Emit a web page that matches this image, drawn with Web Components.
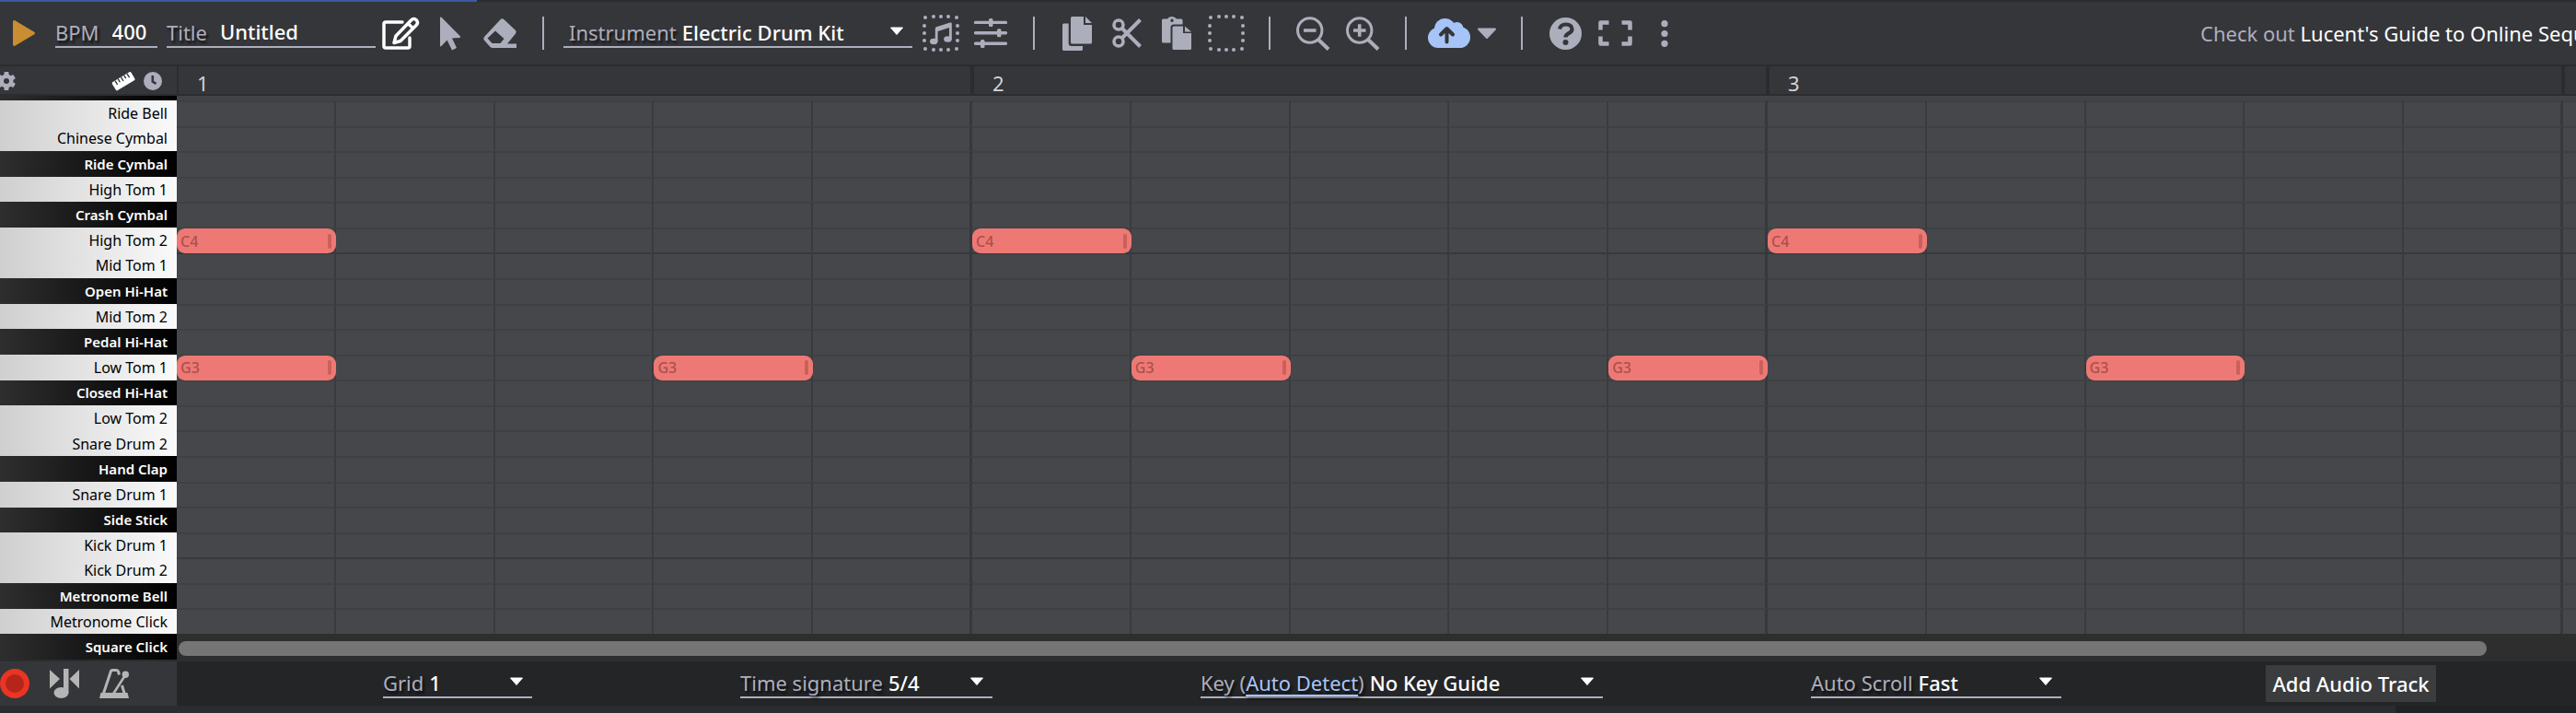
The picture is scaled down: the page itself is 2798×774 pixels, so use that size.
<!DOCTYPE html>
<html lang="en">
<head>
<meta charset="utf-8">
<title>Online Sequencer</title>
<style>
html { background: #2b2c30; }
body { margin: 0; font: 22px/30px "Noto Sans", "Open Sans", sans-serif; color: #fff; }
</style>
</head>
<body>
<seq-app></seq-app>

<template id="app-t">
<style>
:host { display: flex; flex-direction: column; min-height: 100vh; background: #2b2c30; overflow: hidden;
  --panel: #35363a; --line: #2b2c30; --muted: #adaebc; }
.progress { height: 2px; }
.progress i { display: block; height: 2px; width: 518px; background: #3b5ba5; }
</style>
<div class="progress"><i></i></div>
<seq-toolbar></seq-toolbar>
<seq-ruler></seq-ruler>
<seq-roll></seq-roll>
<seq-footer></seq-footer>
</template>

<template id="toolbar-t">
<style>
:host { display: flex; align-items: center; height: 68px; background: var(--panel); border-bottom: 2px solid var(--line); color: var(--muted); }
.play { width: 46px; margin-right: 14px; padding-left: 6px; box-sizing: border-box; }
button { flex: none; width: 54px; height: 54px; padding: 0; border: 0; background: none; color: inherit; display: flex; align-items: center; justify-content: center; }
.on { color: #fff; }
.small { width: 32px; padding-right: 4px; }
hr { flex: none; width: 2px; height: 36px; margin: 0 19px; border: 0; background: var(--muted); }
.bpm { width: 111px; margin-right: 10px; }
.title { width: 227px; }
.inst { width: 379px; margin: 0 4px 0 2px; }
seq-field { flex: none; }
.promo { flex: 0 0 408px; min-width: 0; margin-left: auto; white-space: nowrap; }
a { color: #fff; text-decoration: none; }
</style>
<button class="play" aria-label="Play"><seq-icon name="play"></seq-icon></button>
<seq-field class="bpm" label="BPM" value="400"></seq-field>
<seq-field class="title" label="Title" value="Untitled"></seq-field>
<button class="on" aria-label="Draw"><seq-icon name="pencil"></seq-icon></button>
<button aria-label="Select"><seq-icon name="cursor"></seq-icon></button>
<button aria-label="Erase"><seq-icon name="eraser"></seq-icon></button>
<hr>
<seq-select class="inst" label="Instrument" value="Electric Drum Kit" indent></seq-select>
<button aria-label="Select instrument notes"><seq-icon name="musicbox"></seq-icon></button>
<button aria-label="Mixer"><seq-icon name="sliders"></seq-icon></button>
<hr>
<button aria-label="Copy"><seq-icon name="copy"></seq-icon></button>
<button aria-label="Cut"><seq-icon name="cut"></seq-icon></button>
<button aria-label="Paste"><seq-icon name="paste"></seq-icon></button>
<button aria-label="Select all"><seq-icon name="marquee"></seq-icon></button>
<hr>
<button aria-label="Zoom out"><seq-icon name="zoomout"></seq-icon></button>
<button aria-label="Zoom in"><seq-icon name="zoomin"></seq-icon></button>
<hr>
<button aria-label="Save"><seq-icon name="cloud"></seq-icon></button>
<button class="small" aria-label="Save options"><seq-icon name="caret"></seq-icon></button>
<hr>
<button aria-label="Help"><seq-icon name="help"></seq-icon></button>
<button aria-label="Fullscreen"><seq-icon name="full"></seq-icon></button>
<button aria-label="More"><seq-icon name="more"></seq-icon></button>
<div class="promo">Check out <a href="#guide">Lucent's Guide to Online Sequencer</a></div>
</template>

<template id="field-t">
<style>
:host { display: block; box-sizing: border-box; height: 32px; border-bottom: 2px solid #adaebc; }
label { display: flex; gap: 14px; align-items: center; height: 30px; white-space: nowrap; }
span { color: #adaebc; text-shadow: 2px 3px 3px rgba(0,0,0,.7); }
input { flex: 1; min-width: 0; width: 0; height: 30px; padding: 0 0 2px; border: 0; background: none; color: #fff; font: 500 22px/28px "Noto Sans", sans-serif; outline: 0; box-sizing: border-box; }
</style>
<label><span></span><input type="text"></label>
</template>

<template id="select-t">
<style>
:host { display: block; box-sizing: border-box; height: 32px; border-bottom: 2px solid #adaebc; }
:host([indent]) { padding-left: 6px; }
div { display: flex; gap: 6px; height: 30px; align-items: center; white-space: nowrap; position: relative; }
label, ::slotted(*) { color: #adaebc; text-shadow: 2px 3px 3px rgba(0,0,0,.7); }
select { appearance: none; flex: 1; min-width: 0; height: 30px; margin: 0; padding: 0; border: 0; background: none; color: #fff; font: 500 22px/30px "Noto Sans", sans-serif; outline: 0; }
seq-icon { position: absolute; right: 9px; top: 9px; pointer-events: none; color: #fff; }
</style>
<div><label for="s"><slot></slot></label><select id="s"></select><seq-icon name="arrow"></seq-icon></div>
</template>

<template id="ruler-t">
<style>
:host { display: flex; height: 30px; background: var(--panel); border-bottom: 2px solid var(--line); }
.tools { flex: none; width: 192px; display: flex; align-items: center; box-sizing: border-box; padding: 2px 16px 0 0; color: #adaebc; }
.tools button { padding: 0; border: 0; background: none; color: inherit; height: 22px; display: flex; align-items: center; }
.gear { margin-left: -3px; }
.measure { margin-left: auto; margin-right: 9px; }
.tools .measure { color: #fff; }
.bars { flex: 1; min-width: 0; display: flex; }
.bar { flex: none; width: 864px; box-sizing: border-box; border: solid var(--line); border-width: 0 2px; padding-left: 20px; color: #d2d2d2; height: 30px; }
.bar span { display: block; padding-top: 3px; }
</style>
<div class="tools">
<button class="gear" aria-label="Settings"><seq-icon name="gear"></seq-icon></button>
<button class="measure" aria-label="Measures"><seq-icon name="measure"></seq-icon></button>
<button aria-label="Time"><seq-icon name="clock"></seq-icon></button>
</div>
<div class="bars"></div>
</template>

<template id="roll-t">
<style>
:host { flex: 1; display: flex; min-height: 500px; }
.keys { flex: none; width: 192px; display: flex; flex-direction: column; border-bottom: 2px solid var(--line); }
.edge { height: 5px; background: linear-gradient(90deg, #2e2e2e, #000); }
.main { flex: 1; min-width: 0; display: flex; flex-direction: column; overflow: hidden; }
.bars { flex: 1; display: flex; padding-top: 5px; background: #424347; }
.scroll { flex: none; height: 30px; box-sizing: border-box; padding: 8px 97px 6px 2px; background: #2e2e2e; }
.thumb { height: 16px; border-radius: 8px; background: #757575; }
</style>
<div class="keys"><div class="edge"></div></div>
<div class="main"><div class="bars"></div><div class="scroll"><div class="thumb"></div></div></div>
</template>

<template id="key-t">
<style>
:host { flex: 1 1 0; min-height: 0; display: flex; }
button { flex: 1; border: 0; padding: 0 10px 0 0; text-align: right; font: 16px/24px "Noto Sans", sans-serif; color: #000; background: linear-gradient(90deg, #cfcfcf, #fafafa); white-space: nowrap; min-height: 0; }
:host([black]) button { color: #fff; font-weight: 600; font-size: 15px; background: linear-gradient(90deg, #2e2e2e, #000); }
</style>
<button><slot></slot></button>
</template>

<template id="bar-t">
<style>
:host { flex: none; width: 864px; display: grid; grid-template: repeat(21, minmax(0, 1fr)) / repeat(5, minmax(0, 1fr)); background: #46474b; }
i { border: solid #3f4044; border-width: 2px 0 0; border-right: 2px solid #3a3b3f; }
i.end { border-right: 3px solid #37383c; }
i.octave { border-top-color: #38393d; }
</style>
</template>

<template id="note-t">
<style>
:host { display: flex; align-items: center; justify-content: space-between; box-sizing: border-box; padding: 0 5px 0 4px; margin: 1px 0 -1px; border-radius: 9px; background: #ee7974; color: #a9504d; font: 500 16px/20px "Noto Sans", sans-serif; }
b { width: 4px; height: 16px; border-radius: 2px; background: #c9605c; }
</style>
<slot></slot><b></b>
</template>

<template id="footer-t">
<style>
:host { display: block; }
.row { display: flex; height: 48px; background: #242527; }
.left { flex: none; width: 192px; display: flex; align-items: center; gap: 22px; background: var(--panel); color: #b5b5b5; }
.left button { width: 32px; height: 32px; padding: 0; border: 0; background: none; color: inherit; display: flex; }
.controls { flex: 1; min-width: 0; display: flex; align-items: center; gap: 226px; padding-left: 224px; white-space: nowrap; }
seq-select { flex: none; }
.grid { width: 162px; } .time { width: 274px; } .key { width: 437px; } .auto { width: 272px; }
a { color: #a8c4f7; text-underline-offset: 4px; }
.add { flex: none; width: 185px; height: 40px; margin-left: -4px; padding: 0; border: 0; background: #3b3c3e; color: #fff; font: 500 22px/30px "Noto Sans", sans-serif; }
.strip { height: 8px; display: flex; }
.strip i { width: 196px; margin-left: auto; background: #202123; }
</style>
<div class="row">
<div class="left">
<button aria-label="Record"><seq-icon name="record"></seq-icon></button>
<button aria-label="Snap notes"><seq-icon name="snap"></seq-icon></button>
<button aria-label="Metronome"><seq-icon name="metro"></seq-icon></button>
</div>
<div class="controls">
<seq-select class="grid" label="Grid" value="1"></seq-select>
<seq-select class="time" label="Time signature" value="5/4"></seq-select>
<seq-select class="key" value="No Key Guide"><span>Key (<a href="#detect">Auto Detect</a>)</span></seq-select>
<seq-select class="auto" label="Auto Scroll" value="Fast"></seq-select>
<button class="add">Add Audio Track</button>
</div>
</div>
<div class="strip"><i></i></div>
</template>

<script>
const dots = [[3,3],[12,2],[20,2],[28,2],[37,3],[2,12],[2,20],[2,28],[3,37],[38,12],[38,20],[38,28],[37,37],[12,38],[20,38],[28,38]]
  .map(([x, y]) => `<circle cx="${x}" cy="${y}" r="2"/>`).join('');
const stroke = (w, d, cap = 'butt') => `<path d="${d}" fill="none" stroke="currentColor" stroke-width="${w}" stroke-linecap="${cap}" stroke-linejoin="round"/>`;
const lens = '<circle cx="14.7" cy="15" r="13.2" fill="none" stroke="currentColor" stroke-width="3"/>' + stroke(4, 'M24 25L35 35.5');
const teeth = [0, 60, 120, 180, 240, 300].map(a => `<rect x="7.5" y="0" width="5" height="6" rx="1" transform="rotate(${a} 10 10)"/>`).join('');
const icons = {
  play: [26, 30, '<path d="M2.5 2.5L23.5 15 2.5 27.5Z" fill="#c98d32" stroke="#c98d32" stroke-width="3" stroke-linejoin="round"/>'],
  pencil: [42, 38, stroke(3.5, 'M23 7H5Q3 7 3 9V33Q3 35 5 35H29Q31 35 31 33V24', 'round') + stroke(3.5, 'M14 29.5L16 22 33 4.5Q35.500 2.500 38 4.500L38.500 5Q40.500 7.500 38.500 10L21 27.500Z M29 8.500L35 14')],
  cursor: [22, 37, '<path d="M0 1Q.5 0 1.500 .8L22 21.500Q22.500 22.800 21 23L13 23.500 18 34 13 36.500 7.600 25.600 1.500 32Q0 33 0 31.500Z"/>'],
  eraser: [36, 32, '<path fill-rule="evenodd" d="M18.500 1.200Q20.500-.8 22.500 1.200L34.800 12.800Q36.500 14.500 35 16.500L26 27.500H36V32H10Q8.500 32 7.500 31L.8 23.500Q-.5 21.500 1 20ZM13 13.500L4.500 21.500 9.500 27H18.500L22.500 22Z"/>'],
  musicbox: [40, 40, dots + '<ellipse cx="12.300" cy="29" rx="4.300" ry="3.200"/><ellipse cx="27.500" cy="26.500" rx="4.300" ry="3.200"/><path d="M13.800 29V15Q13.800 13.700 15 13.200L30 8.500Q31.800 8 31.800 9.500V26.500H29V14L16.600 18V29Z"/>'],
  sliders: [36, 32, stroke(3.4, 'M1.500 4.400H34.500M1.500 15.700H34.500M1.500 27.300H34.500', 'round') + '<rect x="16" width="4.500" height="9" rx="1.500"/><rect x="25" y="11.300" width="4.500" height="9" rx="1.500"/><rect x="7" y="23" width="4.500" height="9" rx="1.500"/>'],
  copy: [32, 37, '<path d="M10.500 0H23V9H32V28Q32 29.500 30.500 29.500H10.500Q9 29.500 9 28V1.500Q9 0 10.500 0ZM25 0L32 7H25ZM1.500 7.500H6.700V29Q6.700 32 9.700 32H22V35.500Q22 37 20.500 37H1.500Q0 37 0 35.500V9Q0 7.500 1.500 7.500Z"/>'],
  cut: [32, 32, stroke(3.6, 'M7 2A5 5 0 1 0 7 12A5 5 0 1 0 7 2M7 20A5 5 0 1 0 7 30A5 5 0 1 0 7 20') + stroke(4, 'M10.500 10.500L30.500 30.500M10.500 21.500L30.500 1.500')],
  paste: [32, 36, '<path fill-rule="evenodd" d="M1.500 2.500H6Q8 0 11 0T16 2.500H21Q22.500 2.500 22.500 4V8.500H13Q9.500 8.500 9.500 12V28.500H1.500Q0 28.500 0 27V4Q0 2.500 1.500 2.500ZM11 2.500A1.700 1.700 0 1 0 11 5.900A1.700 1.700 0 1 0 11 2.500Z"/><path d="M13 10.500H23V18H32V34.500Q32 36 30.500 36H13Q11.500 36 11.500 34.500V12Q11.500 10.500 13 10.500ZM25 10.500L32 16.500H25Z"/>'],
  marquee: [40, 40, dots],
  zoomout: [36, 37, lens + stroke(3.6, 'M8 15H21.500')],
  zoomin: [36, 37, lens + stroke(3.6, 'M8 15H21.500M14.700 8.200V21.800')],
  cloud: [46, 32, '<g fill="#a6c4f7"><circle cx="18.500" cy="11.500" r="11.500"/><circle cx="31.500" cy="11" r="7"/><circle cx="11" cy="21" r="11"/><circle cx="34.500" cy="20.500" r="11.500"/><rect x="11" y="14" width="24" height="18"/></g><path d="M20.500 25.500V12M14 17.500L20.500 11 27 17.500" fill="none" stroke="#35363a" stroke-width="4" stroke-linecap="round" stroke-linejoin="round"/>'],
  caret: [22, 13, '<path d="M2 1.500H20L11 11Z" stroke="currentColor" stroke-width="2" stroke-linejoin="round"/>'],
  help: [35, 35, '<circle cx="17.500" cy="17.500" r="17.500"/><path d="M11 12.500Q12 7.500 18 7.500T24.500 12.500Q24.500 15.500 21 17.200T17.500 21.500" fill="none" stroke="#35363a" stroke-width="4.200"/><circle cx="17.500" cy="27" r="3" fill="#35363a"/>'],
  full: [37, 28, stroke(4.5, 'M2.500 10.500V2.500H11.500M25.500 2.500H34.500V10.500M34.500 17.500V25.500H25.500M11.500 25.500H2.500V17.500')],
  more: [8, 29, '<circle cx="4" cy="3.700" r="3.600"/><circle cx="4" cy="14.500" r="3.600"/><circle cx="4" cy="25.300" r="3.600"/>'],
  arrow: [16, 10, '<path d="M1.500 1H14.500L8 8.500Z" stroke="currentColor" stroke-linejoin="round"/>'],
  gear: [20, 20, teeth + '<path fill-rule="evenodd" d="M10 2.500A7.500 7.500 0 1 0 10 17.500A7.500 7.500 0 1 0 10 2.500ZM10 7A3 3 0 1 1 10 13A3 3 0 1 1 10 7Z"/>'],
  measure: [26, 20, '<g transform="rotate(-31 13 10)"><rect x="1" y="5" width="24" height="10.500" rx="1.500"/><path d="M5.500 5V10M9.300 5V9M13 5V10M16.800 5V9M20.600 5V10" stroke="#35363a" stroke-width="1.400"/></g>'],
  clock: [20, 20, '<circle cx="10" cy="10" r="10"/><path d="M9.800 4V10.500L13.500 13" fill="none" stroke="#35363a" stroke-width="2.600"/>'],
  record: [32, 32, '<circle cx="16" cy="16" r="16" fill="#ea3424"/><circle cx="16" cy="16" r="10" fill="#b62519"/>'],
  snap: [32, 32, '<path d="M0 1L11 11 0 21.500ZM32 1L21.500 11 32 21.500ZM15 0H20.500V26H15Z"/><ellipse cx="12.500" cy="26" rx="8" ry="6"/>'],
  metro: [32, 32, stroke(3, 'M4 28L12.500 2.500Q13 1.500 14 1.500H18.500Q20 1.500 20.500 3L21.500 6.500M24.500 18L27.500 28') + stroke(2.6, 'M14.500 28L28 7') + '<circle cx="28.300" cy="6.300" r="3.700"/><path d="M1.500 26H30.500L32 32H0Z"/>']
};

/* Base class: clones the element's template into an open shadow root. */
class Part extends HTMLElement {
  constructor(id) {
    super();
    this.attachShadow({ mode: 'open' });
    if (id) this.shadowRoot.append(document.getElementById(id).content.cloneNode(true));
  }
  $(sel) { return this.shadowRoot.querySelector(sel); }
}
customElements.define('seq-icon', class extends Part {
  connectedCallback() {
    const [w, h, body] = icons[this.getAttribute('name')];
    this.shadowRoot.innerHTML = `<style>:host{display:block;flex:none}svg{display:block;overflow:visible}</style><svg width="${w}" height="${h}" viewBox="0 0 ${w} ${h}" fill="currentColor" aria-hidden="true">${body}</svg>`;
  }
});
customElements.define('seq-field', class extends Part {
  constructor() { super('field-t'); }
  connectedCallback() {
    this.$('span').textContent = this.getAttribute('label');
    this.$('input').value = this.getAttribute('value');
  }
});
customElements.define('seq-select', class extends Part {
  constructor() { super('select-t'); }
  connectedCallback() {
    if (this.hasAttribute('label')) this.$('slot').textContent = this.getAttribute('label');
    this.$('select').replaceChildren(new Option(this.getAttribute('value')));
  }
});
customElements.define('seq-key', class extends Part { constructor() { super('key-t'); } });
customElements.define('seq-note', class extends Part { constructor() { super('note-t'); } });
customElements.define('seq-bar', class extends Part {
  constructor() { super('bar-t'); }
  set notes(list) {
    for (let r = 1; r <= 21; r++) for (let c = 1; c <= 5; c++) {
      const cell = document.createElement('i');
      cell.style.gridArea = `${r} / ${c}`;
      cell.classList.toggle('end', c === 5);
      cell.classList.toggle('octave', r === 7 || r === 19);
      this.shadowRoot.append(cell);
    }
    for (const [name, row, col] of list) {
      const note = document.createElement('seq-note');
      note.textContent = name;
      note.style.gridArea = `${row} / ${col}`;
      this.shadowRoot.append(note);
    }
  }
});
customElements.define('seq-toolbar', class extends Part { constructor() { super('toolbar-t'); } });
customElements.define('seq-footer', class extends Part { constructor() { super('footer-t'); } });
customElements.define('seq-ruler', class extends Part {
  constructor() {
    super('ruler-t');
    for (const n of ['1', '2', '3', '']) {
      const bar = document.createElement('div');
      bar.className = 'bar';
      const label = document.createElement('span');
      label.textContent = n;
      bar.append(label);
      this.$('.bars').append(bar);
    }
  }
});
customElements.define('seq-roll', class extends Part {
  constructor() {
    super('roll-t');
    const keys = ['Ride Bell', 'Chinese Cymbal', '*Ride Cymbal', 'High Tom 1', '*Crash Cymbal', 'High Tom 2', 'Mid Tom 1', '*Open Hi-Hat', 'Mid Tom 2', '*Pedal Hi-Hat', 'Low Tom 1', '*Closed Hi-Hat', 'Low Tom 2', 'Snare Drum 2', '*Hand Clap', 'Snare Drum 1', '*Side Stick', 'Kick Drum 1', 'Kick Drum 2', '*Metronome Bell', 'Metronome Click', '*Square Click'];
    for (const k of keys) {
      const key = document.createElement('seq-key');
      key.textContent = k.replace('*', '');
      key.toggleAttribute('black', k[0] === '*');
      this.$('.keys').append(key);
    }
    const bars = [
      [['C4', 6, 1], ['G3', 11, 1], ['G3', 11, 4]],
      [['C4', 6, 1], ['G3', 11, 2], ['G3', 11, 5]],
      [['C4', 6, 1], ['G3', 11, 3]],
      []
    ];
    for (const notes of bars) {
      const bar = document.createElement('seq-bar');
      bar.notes = notes;
      this.$('.bars').append(bar);
    }
  }
});
customElements.define('seq-app', class extends Part { constructor() { super('app-t'); } });
</script>
</body>
</html>
